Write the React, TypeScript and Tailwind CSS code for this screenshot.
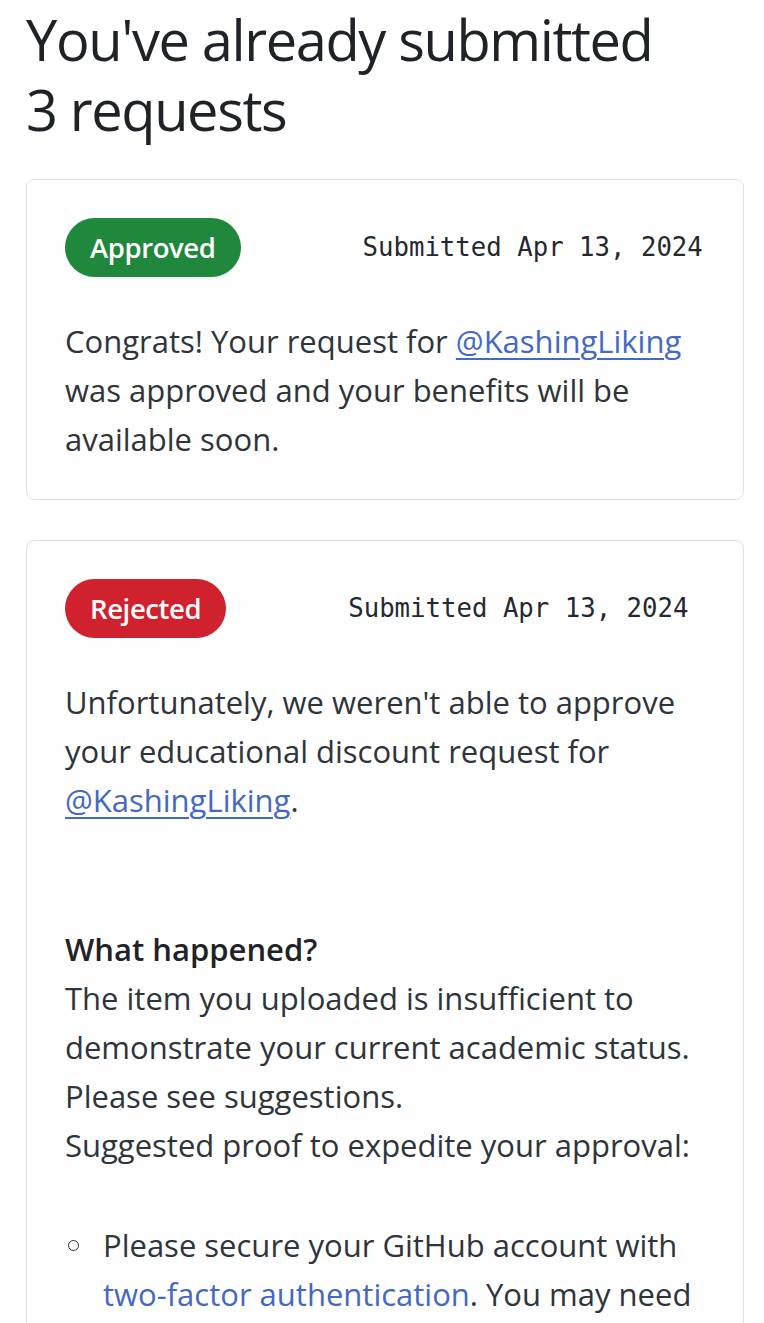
import React from 'react';

type Status = 'approved' | 'rejected';

const StatusBadge: React.FC<{ status: Status }> = ({ status }) => {
    const approved = status === 'approved';
    return (
        <span
            className={`h-[59px] shrink-0 rounded-full px-[25px] flex items-center text-white text-[27.5px] font-semibold tracking-[-0.4px] ${
                approved ? 'bg-[#1f883d]' : 'bg-[#cf222e]'
            }`}
        >
            {approved ? 'Approved' : 'Rejected'}
        </span>
    );
};

const RequestHeader: React.FC<{ status: Status; date: string }> = ({ status, date }) => (
    <div className="flex items-center">
        <StatusBadge status={status} />
        <span className="ml-[122px] whitespace-nowrap text-[25.7px] text-[#24292f] font-['DejaVu_Sans_Mono',monospace]">
            Submitted {date}
        </span>
    </div>
);

const UserLink = () => (
    <a href="#" className="text-[#4468c4] underline underline-offset-[5px] decoration-[1.5px]">
        @KashingLiking
    </a>
);

export default function App() {
    return (
        <div className="min-h-screen bg-white pl-[26px] pt-[4px] text-[#2f343a] font-['Open_Sans',sans-serif]">
            <h1 className="w-[640px] text-[56px] leading-[70px] font-normal text-[#1f2328] tracking-[-1.4px]">
                You've already submitted 3 requests
            </h1>

            <div className="mt-[35px] flex flex-col gap-[40px] w-[718px]">
                <div className="border border-[#dfe3e8] rounded-[8px] bg-[#fefefe] px-[38px] pt-[38px] pb-[35px]">
                    <RequestHeader status="approved" date="Apr 13, 2024" />
                    <p className="mt-[40px] text-[31px] leading-[49px]">
                        Congrats! Your request for <UserLink /> was approved and your benefits will be available soon.
                    </p>
                </div>

                <div className="border border-[#dfe3e8] border-b-0 rounded-t-[8px] bg-[#fefefe] px-[38px] pt-[38px] pb-[40px]">
                    <RequestHeader status="rejected" date="Apr 13, 2024" />
                    <div className="mt-[40px] text-[31px] leading-[49px]">
                        <p>
                            Unfortunately, we weren't able to approve your educational discount request for <UserLink />.
                        </p>
                        <div className="mt-[100px]">
                            <p className="font-semibold text-[#1f2328]">What happened?</p>
                            <p>The item you uploaded is insufficient to demonstrate your current academic status.</p>
                            <p>Please see suggestions.</p>
                            <p>Suggested proof to expedite your approval:</p>
                        </div>
                        <ul className="mt-[51px]">
                            <li className="flex">
                                <span className="mt-[19px] ml-[3px] mr-[24px] w-[11px] h-[11px] shrink-0 rounded-full border-[1.5px] border-[#2f343a]" />
                                <span>
                                    Please secure your GitHub account with{' '}
                                    <a href="#" className="text-[#4468c4]">
                                        two-factor authentication
                                    </a>
                                    . You may need to sign in again after enabling it.
                                </span>
                            </li>
                        </ul>
                    </div>
                </div>
            </div>
        </div>
    );
}
